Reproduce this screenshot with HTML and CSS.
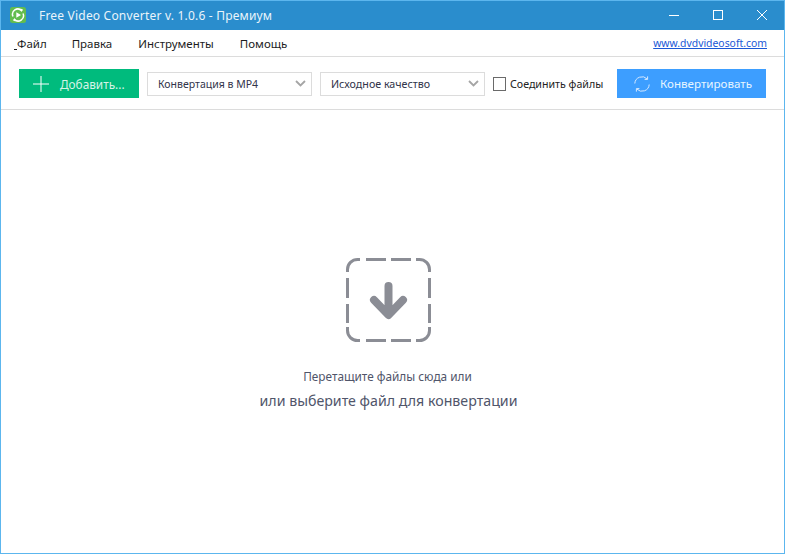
FILE: index.html
```html
<!DOCTYPE html>
<html lang="ru">
<head>
<meta charset="utf-8">
<title>Free Video Converter</title>
<link rel="stylesheet" href="styles.css">
</head>
<body>
<div class="window">
  <header class="titlebar">
    <svg class="app-icon" width="16" height="16" viewBox="0 0 16 16">
      <rect width="16" height="16" rx="2.5" fill="#63bd4f"/>
      <path d="M3 9.500A5.300 5.300 0 0 1 11.600 3.600M13 6.500A5.300 5.300 0 0 1 4.400 12.400" fill="none" stroke="#fff" stroke-width="1.500"/>
      <path d="M6.300 5.200v5.600L11 8z" fill="#fff"/>
      <path d="M10.600 1.600l2.600 1.200-2 2.200zM5.400 14.400l-2.600-1.200 2-2.200z" fill="#fff"/>
    </svg>
    <span class="app-title">Free Video Converter v. 1.0.6 - Премиум</span>
    <div class="win-controls">
      <svg width="10" height="10" viewBox="0 0 10 10"><path d="M0 5.500h10" stroke="#fff" fill="none"/></svg>
      <svg width="10" height="10" viewBox="0 0 10 10"><rect x=".5" y=".5" width="9" height="9" stroke="#fff" fill="none"/></svg>
      <svg width="10" height="10" viewBox="0 0 10 10"><path d="M0 0l10 10M10 0L0 10" stroke="#fff" fill="none"/></svg>
    </div>
  </header>
  <nav class="menubar">
    <span class="menu-item menu-file"><span class="mnemonic"></span>Файл</span>
    <span class="menu-item">Правка</span>
    <span class="menu-item">Инструменты</span>
    <span class="menu-item">Помощь</span>
    <a class="site-link" href="#">www.dvdvideosoft.com</a>
  </nav>
  <div class="toolbar">
    <button class="btn btn-add">
      <svg width="16" height="16" viewBox="0 0 16 16"><path d="M8 0v16M0 8h16" stroke="#fff" fill="none"/></svg>
      <span>Добавить...</span>
    </button>
    <div class="select select-format">
      <span>Конвертация в MP4</span>
      <svg width="11" height="7" viewBox="0 0 11 7"><path d="M1 1l4.500 4.500L10 1" stroke="#a5a5a5" stroke-width="1.800" fill="none"/></svg>
    </div>
    <div class="select select-quality">
      <span>Исходное качество</span>
      <svg width="11" height="7" viewBox="0 0 11 7"><path d="M1 1l4.500 4.500L10 1" stroke="#a5a5a5" stroke-width="1.800" fill="none"/></svg>
    </div>
    <label class="merge"><span class="checkbox"></span><span>Соединить файлы</span></label>
    <button class="btn btn-convert">
      <svg width="16" height="16" viewBox="0 0 16 16" fill="none" stroke="#d6e9ff">
        <path d="M.8 7.500A7.200 7.200 0 0 1 13.200 3M15.200 8.500A7.200 7.200 0 0 1 2.800 13"/>
        <path d="M13.600 .4v3h-3M2.400 15.600v-3h3"/>
      </svg>
      <span>Конвертировать</span>
    </button>
  </div>
  <main class="dropzone">
    <svg class="drop-icon" width="85" height="85" viewBox="0 0 85 85" fill="none" stroke="#8b8d95" stroke-width="3">
      <path d="M14 1.500H11.500A10 10 0 0 0 1.500 11.500V14"/>
      <path d="M20 1.500H40M45 1.500H65"/>
      <path d="M70 1.500H73.500A10 10 0 0 1 83.500 11.500V14"/>
      <path d="M1.500 20V40M1.500 46V65M83.500 20V40M83.500 46V65"/>
      <path d="M1.500 69V72.500A10 10 0 0 0 11.500 82.500H14"/>
      <path d="M20 82.500H40M45 82.500H65"/>
      <path d="M70 82.500H73.500A10 10 0 0 0 83.500 72.500V69"/>
      <path d="M42.500 28V56M28 42L42.500 57L57 42" stroke-width="8" stroke-linecap="round" stroke-linejoin="round"/>
    </svg>
    <p class="drop-small">Перетащите файлы сюда или</p>
    <p class="drop-large">или выберите файл для конвертации</p>
  </main>
</div>
</body>
</html>
```

FILE: styles.css
```css
* { box-sizing: border-box; }
html, body { margin: 0; height: 100%; }
body { font-family: "Noto Sans", "Liberation Sans", sans-serif; font-size: 11px; background: #fff; color: #222; overflow: hidden; }
.window { width: 785px; height: 554px; border: 1px solid #5cb6ee; display: flex; flex-direction: column; background: #fff; }
.titlebar { height: 29px; flex: none; background: #2a8dcd; display: flex; align-items: center; padding: 0 0 1px 9px; color: #e9f4fb; }
.app-title { margin-left: 13px; font-size: 12px; letter-spacing: .2px; }
.app-icon { flex: none; }
.win-controls { margin-left: auto; display: flex; gap: 34px; padding-right: 17px; }
.menubar { height: 27px; flex: none; display: flex; align-items: center; padding: 0 17px 0 13px; border-bottom: 1px solid #dcdcdc; font-size: 11.500px; color: #1d1d1d; }
.menu-item { margin-right: 26px; white-space: nowrap; }
.menu-file { margin-right: 25px; }
.mnemonic { display: inline-block; width: 3px; height: 2px; border-bottom: 1px solid #1d1d1d; vertical-align: -2px; }
.site-link { margin-left: auto; color: #1a57d6; font-size: 10.400px; }
.toolbar { height: 53px; flex: none; display: flex; align-items: center; padding: 1px 18px 0; border-bottom: 1px solid #dcdcdc; }
.btn { height: 29px; border: 0; padding: 0; display: flex; align-items: center; font: inherit; color: #e6f5ff; }
.btn-add { width: 120px; margin-right: 8px; background: #00bb7d; padding-left: 14px; gap: 11px; font-size: 11.800px; color: #d5f3e6; }
.select { width: 165px; height: 24px; margin-right: 8px; border: 1px solid #dcdcdc; display: flex; align-items: center; justify-content: space-between; padding: 0 5px 0 10px; color: #31344a; }
.select-format { font-size: 10.500px; }
.select-quality { font-size: 10.700px; }
.merge { display: flex; align-items: center; gap: 4px; color: #222; font-size: 10.650px; }
.checkbox { width: 13px; height: 14px; border: 1px solid #6a6a6a; display: block; }
.btn-convert { width: 149px; margin-left: auto; background: #3d9eff; padding-left: 17px; gap: 10px; font-size: 11.600px; }
.dropzone { flex: 1; display: flex; flex-direction: column; align-items: center; padding: 148px 8px 0 0; }
.drop-icon { flex: none; }
.drop-small { margin: 25px 2px 0 0; font-size: 11.800px; line-height: 16px; color: #50556a; }
.drop-large { margin: 7px 0 0; font-size: 14.200px; line-height: 20px; color: #50556a; }
```
